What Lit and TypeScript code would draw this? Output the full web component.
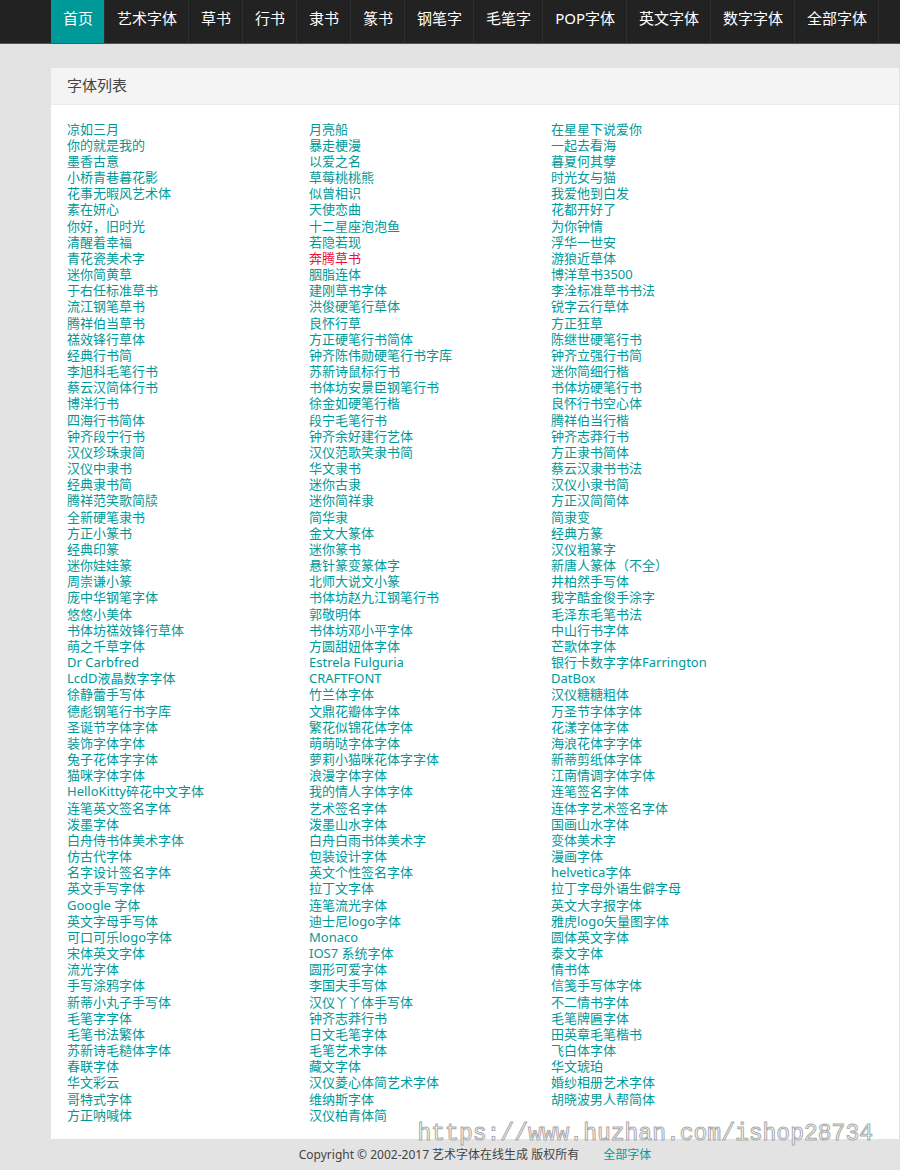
import { LitElement, html, css } from "lit";
import { customElement } from "lit/decorators.js";
import { classMap } from "lit/directives/class-map.js";

const NAV = ["首页", "艺术字体", "草书", "行书", "隶书", "篆书", "钢笔字", "毛笔字", "POP字体", "英文字体", "数字字体", "全部字体"];

const FONTS = `凉如三月|月亮船|在星星下说爱你
你的就是我的|暴走梗漫|一起去看海
墨香古意|以爱之名|暮夏何其孽
小桥青巷暮花影|草莓桃桃熊|时光女与猫
花事无暇风艺术体|似曾相识|我爱他到白发
素在妍心|天使恋曲|花都开好了
你好，旧时光|十二星座泡泡鱼|为你钟情
清醒着幸福|若隐若现|浮华一世安
青花瓷美术字|奔腾草书|游狼近草体
迷你简黄草|胭脂连体|博洋草书3500
于右任标准草书|建刚草书字体|李洤标准草书书法
流江钢笔草书|洪俊硬笔行草体|锐字云行草体
腾祥伯当草书|良怀行草|方正狂草
禚效锋行草体|方正硬笔行书简体|陈继世硬笔行书
经典行书简|钟齐陈伟勋硬笔行书字库|钟齐立强行书简
李旭科毛笔行书|苏新诗鼠标行书|迷你简细行楷
蔡云汉简体行书|书体坊安景臣钢笔行书|书体坊硬笔行书
博洋行书|徐金如硬笔行楷|良怀行书空心体
四海行书简体|段宁毛笔行书|腾祥伯当行楷
钟齐段宁行书|钟齐余好建行艺体|钟齐志莽行书
汉仪珍珠隶简|汉仪范歌笑隶书简|方正隶书简体
汉仪中隶书|华文隶书|蔡云汉隶书书法
经典隶书简|迷你古隶|汉仪小隶书简
腾祥范笑歌简牍|迷你简祥隶|方正汉简简体
全新硬笔隶书|简华隶|简隶变
方正小篆书|金文大篆体|经典方篆
经典印篆|迷你篆书|汉仪粗篆字
迷你娃娃篆|悬针篆变篆体字|新唐人篆体（不全）
周崇谦小篆|北师大说文小篆|井柏然手写体
庞中华钢笔字体|书体坊赵九江钢笔行书|我字酷金俊手涂字
悠悠小美体|郭敬明体|毛泽东毛笔书法
书体坊禚效锋行草体|书体坊邓小平字体|中山行书字体
萌之千草字体|方圆甜妞体字体|芒歌体字体
Dr Carbfred|Estrela Fulguria|银行卡数字字体Farrington
LcdD液晶数字字体|CRAFTFONT|DatBox
徐静蕾手写体|竹兰体字体|汉仪糖糖粗体
德彪钢笔行书字库|文鼎花瓣体字体|万圣节字体字体
圣诞节字体字体|繁花似锦花体字体|花漾字体字体
装饰字体字体|萌萌哒字体字体|海浪花体字字体
兔子花体字字体|萝莉小猫咪花体字字体|新蒂剪纸体字体
猫咪字体字体|浪漫字体字体|江南情调字体字体
HelloKitty碎花中文字体|我的情人字体字体|连笔签名字体
连笔英文签名字体|艺术签名字体|连体字艺术签名字体
泼墨字体|泼墨山水字体|国画山水字体
白舟侍书体美术字体|白舟白雨书体美术字|变体美术字
仿古代字体|包装设计字体|漫画字体
名字设计签名字体|英文个性签名字体|helvetica字体
英文手写字体|拉丁文字体|拉丁字母外语生僻字母
Google 字体|连笔流光字体|英文大字报字体
英文字母手写体|迪士尼logo字体|雅虎logo矢量图字体
可口可乐logo字体|Monaco|圆体英文字体
宋体英文字体|IOS7 系统字体|泰文字体
流光字体|圆形可爱字体|情书体
手写涂鸦字体|李国夫手写体|信笺手写体字体
新蒂小丸子手写体|汉仪丫丫体手写体|不二情书字体
毛笔字字体|钟齐志莽行书|毛笔牌匾字体
毛笔书法繁体|日文毛笔字体|田英章毛笔楷书
苏新诗毛糙体字体|毛笔艺术字体|飞白体字体
春联字体|藏文字体|华文琥珀
华文彩云|汉仪菱心体简艺术字体|婚纱相册艺术字体
哥特式字体|维纳斯字体|胡晓波男人帮简体
方正呐喊体|汉仪柏青体简`.split("\n").map((row) => row.split("|"));

const HIGHLIGHTED = "奔腾草书";
const ROWS_PER_GROUP = 6;

const GROUPS: string[][] = [];
for (let i = 0; i < FONTS.length; i += ROWS_PER_GROUP) {
  GROUPS.push(FONTS.slice(i, i + ROWS_PER_GROUP).flat());
}

@customElement("app-root")
export class AppRoot extends LitElement {
  static styles = css`
    :host {
      display: block;
      position: relative;
      min-height: 100vh;
      overflow-x: hidden;
      background: #e3e3e3;
      color: #444;
      font-family: "Noto Sans", "Noto Sans CJK SC", sans-serif;
      font-size: 13px;
      line-height: 16px;
    }
    a {
      color: #099;
      text-decoration: none;
    }
    a:hover,
    .hot {
      color: #e8113c;
    }
    .nav {
      background: #222;
      border-bottom: 1px solid #555;
      padding-left: 51px;
    }
    .nav ul {
      display: flex;
      margin: 0;
      padding: 0;
      list-style: none;
    }
    .nav a {
      display: block;
      padding: 0 11px 7px 12px;
      border-right: 1px solid #2f2f2f;
      color: #fff;
      font-size: 15px;
      line-height: 36px;
      white-space: nowrap;
    }
    .nav a.current {
      background: #099;
    }
    .page {
      padding: 24px 1px 0 51px;
    }
    .card {
      background: #fff;
    }
    .title {
      margin: 0;
      padding: 0 16px 2px;
      background: #f4f4f4;
      border-bottom: 1px solid #ebebeb;
      font-size: 15px;
      font-weight: 400;
      line-height: 34px;
    }
    .list {
      display: flex;
      flex-direction: column;
      gap: 1px;
      padding: 16px;
    }
    .group {
      display: grid;
      grid-template-columns: repeat(auto-fill, 242px);
      margin: 0;
      padding: 0;
      list-style: none;
    }
    .group li {
      height: 16px;
      white-space: nowrap;
    }
    .footer {
      display: flex;
      justify-content: center;
      gap: 24px;
      padding: 8px 0 6px;
      font-size: 12px;
    }
    .watermark {
      position: absolute;
      right: 27px;
      bottom: 20px;
      color: #fff;
      -webkit-text-stroke: 1px #aaa;
      font-family: "Liberation Mono", monospace;
      font-size: 23px;
      line-height: 32px;
      pointer-events: none;
    }
  `;

  render() {
    return html`
      <nav class="nav">
        <ul>
          ${NAV.map((label, i) => html`<li><a href="#" class=${classMap({ current: i === 0 })}>${label}</a></li>`)}
        </ul>
      </nav>
      <div class="page">
        <main class="card">
          <h1 class="title">字体列表</h1>
          <div class="list">
            ${GROUPS.map(
              (names) => html`<ul class="group">
                ${names.map((name) => html`<li><a href="#" class=${classMap({ hot: name === HIGHLIGHTED })}>${name}</a></li>`)}
              </ul>`
            )}
          </div>
        </main>
        <footer class="footer">
          <span>Copyright © 2002-2017 艺术字体在线生成 版权所有</span>
          <a href="#">全部字体</a>
        </footer>
      </div>
      <div class="watermark">https://www.huzhan.com/ishop28734</div>
    `;
  }
}
